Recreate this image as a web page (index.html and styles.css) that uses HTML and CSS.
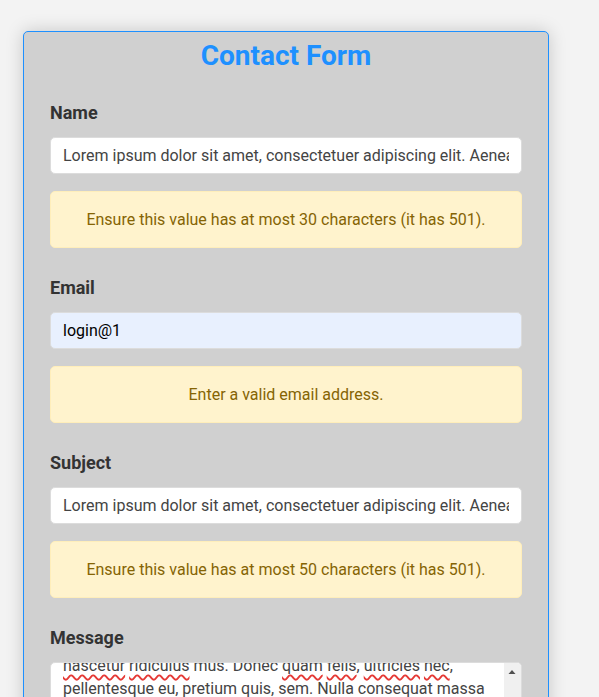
FILE: index.html
```html
<!DOCTYPE html>
<html lang="en">
<head>
<meta charset="utf-8">
<title>Contact Form</title>
<link rel="stylesheet" href="styles.css">
</head>
<body>
<div class="card">
  <h2 class="title">Contact Form</h2>
  <div class="group">
    <label class="label">Name</label>
    <input class="field" type="text" value="Lorem ipsum dolor sit amet, consectetuer adipiscing elit. Aenean commodo ligula eget dolor.">
    <div class="alert">Ensure this value has at most 30 characters (it has 501).</div>
  </div>
  <div class="group">
    <label class="label">Email</label>
    <input class="field field-autofill" type="text" value="login@1">
    <div class="alert">Enter a valid email address.</div>
  </div>
  <div class="group">
    <label class="label">Subject</label>
    <input class="field" type="text" value="Lorem ipsum dolor sit amet, consectetuer adipiscing elit. Aenean commodo ligula eget dolor.">
    <div class="alert">Ensure this value has at most 50 characters (it has 501).</div>
  </div>
  <div class="group">
    <label class="label">Message</label>
    <div class="textarea">
      <div class="ta-content" id="message">
        <div class="line">Lorem ipsum dolor sit amet, consectetuer adipiscing elit.</div>
        <div class="line">Aenean commodo ligula eget dolor. Aenean massa. Cum</div>
        <div class="line">sociis natoque penatibus et magnis dis parturient montes,</div>
        <div class="line"><span class="sp">nascetur</span> <span class="sp">ridiculus</span> mus. Donec <span class="sp">quam</span> <span class="sp">felis</span>, <span class="sp">ultricies</span> <span class="sp">nec</span>,</div>
        <div class="line"><span class="sp">pellentesque</span> eu, pretium quis, sem. <span class="sp">Nulla</span> <span class="sp">consequat</span> massa</div>
        <div class="line">quis enim. Donec pede justo, fringilla vel, aliquet nec,</div>
        <div class="line">vulputate eget, arcu. In enim justo, rhoncus ut, imperdiet a,</div>
        <div class="line">venenatis vitae, justo. Nullam dictum felis eu pede mollis</div>
        <div class="line">pretium. Integer tincidunt. Cras dapibus. Vivamus elementum</div>
        <div class="line">semper nisi. Aenean vulputate eleifend tellus. Aenean leo</div>
        <div class="line">ligula, porttitor eu, consequat vitae, eleifend ac, enim.</div>
        <div class="line">Aliquam lorem ante, dapibus in, viverra quis, feugiat a,</div>
        <div class="line">tellus. Phasellus viverra nulla ut metus varius laoreet.</div>
      </div>
      <div class="ta-scrollbar">
        <svg class="ta-arrow" width="17" height="17" viewBox="0 0 17 17"><polygon points="4.5,11 11.5,11 8,7" fill="#505050"/></svg>
      </div>
    </div>
  </div>
</div>
<script src="script.js"></script>
</body>
</html>
```

FILE: styles.css
```css
html, body {
  margin: 0;
  padding: 0;
}
body {
  background: #f3f3f3;
  font-family: Roboto, "Liberation Sans", Arial, sans-serif;
  padding: 31px 0 40px 23px;
  overflow: hidden;
}
.card {
  width: 526px;
  box-sizing: border-box;
  background: #d0d0d0;
  border: 1px solid #1e90ff;
  border-radius: 5px;
  box-shadow: 0 0 18px rgba(0, 0, 0, 0.18);
  padding: 7px 26px 30px 26px;
}
.title {
  margin: 0 0 30px 0;
  font-size: 28px;
  font-weight: 700;
  color: #1e90ff;
  text-align: center;
  line-height: 33px;
}
.group {
  margin-bottom: 29px;
}
.label {
  display: block;
  font-size: 18px;
  font-weight: 700;
  color: #333;
  line-height: 21px;
  margin-bottom: 14px;
}
.field {
  display: block;
  width: 100%;
  box-sizing: border-box;
  height: 37px;
  padding: 0 12px;
  border: 1px solid #dcdcdc;
  border-radius: 5px;
  background: #fff;
  font-family: Roboto, "Liberation Sans", Arial, sans-serif;
  font-size: 16px;
  color: #444;
  margin: 0 0 17px 0;
  outline: none;
}
.field-autofill {
  background: #e8f0fe;
  color: #000;
}
.alert {
  box-sizing: border-box;
  height: 57px;
  display: flex;
  align-items: center;
  justify-content: center;
  background: #fff3cd;
  border: 1px solid #ffeeba;
  border-radius: 5px;
  color: #856404;
  font-size: 16px;
}
.textarea {
  box-sizing: border-box;
  height: 150px;
  display: flex;
  background: #fff;
  border: 1px solid #dcdcdc;
  border-radius: 5px;
  overflow: hidden;
}
.ta-content {
  flex: 1;
  overflow: hidden;
  padding: 12px 12px;
  font-size: 16px;
  line-height: 22.4px;
  color: #444;
  white-space: nowrap;
}
.ta-scrollbar {
  width: 17px;
  flex: none;
  background: #f0f0f0;
}
.ta-arrow {
  display: block;
}
.sp {
  text-decoration: underline wavy #e53935;
  text-decoration-thickness: 1.5px;
  text-underline-offset: 3px;
}
```

FILE: script.js
```js
document.getElementById('message').scrollTop = 87;
```
